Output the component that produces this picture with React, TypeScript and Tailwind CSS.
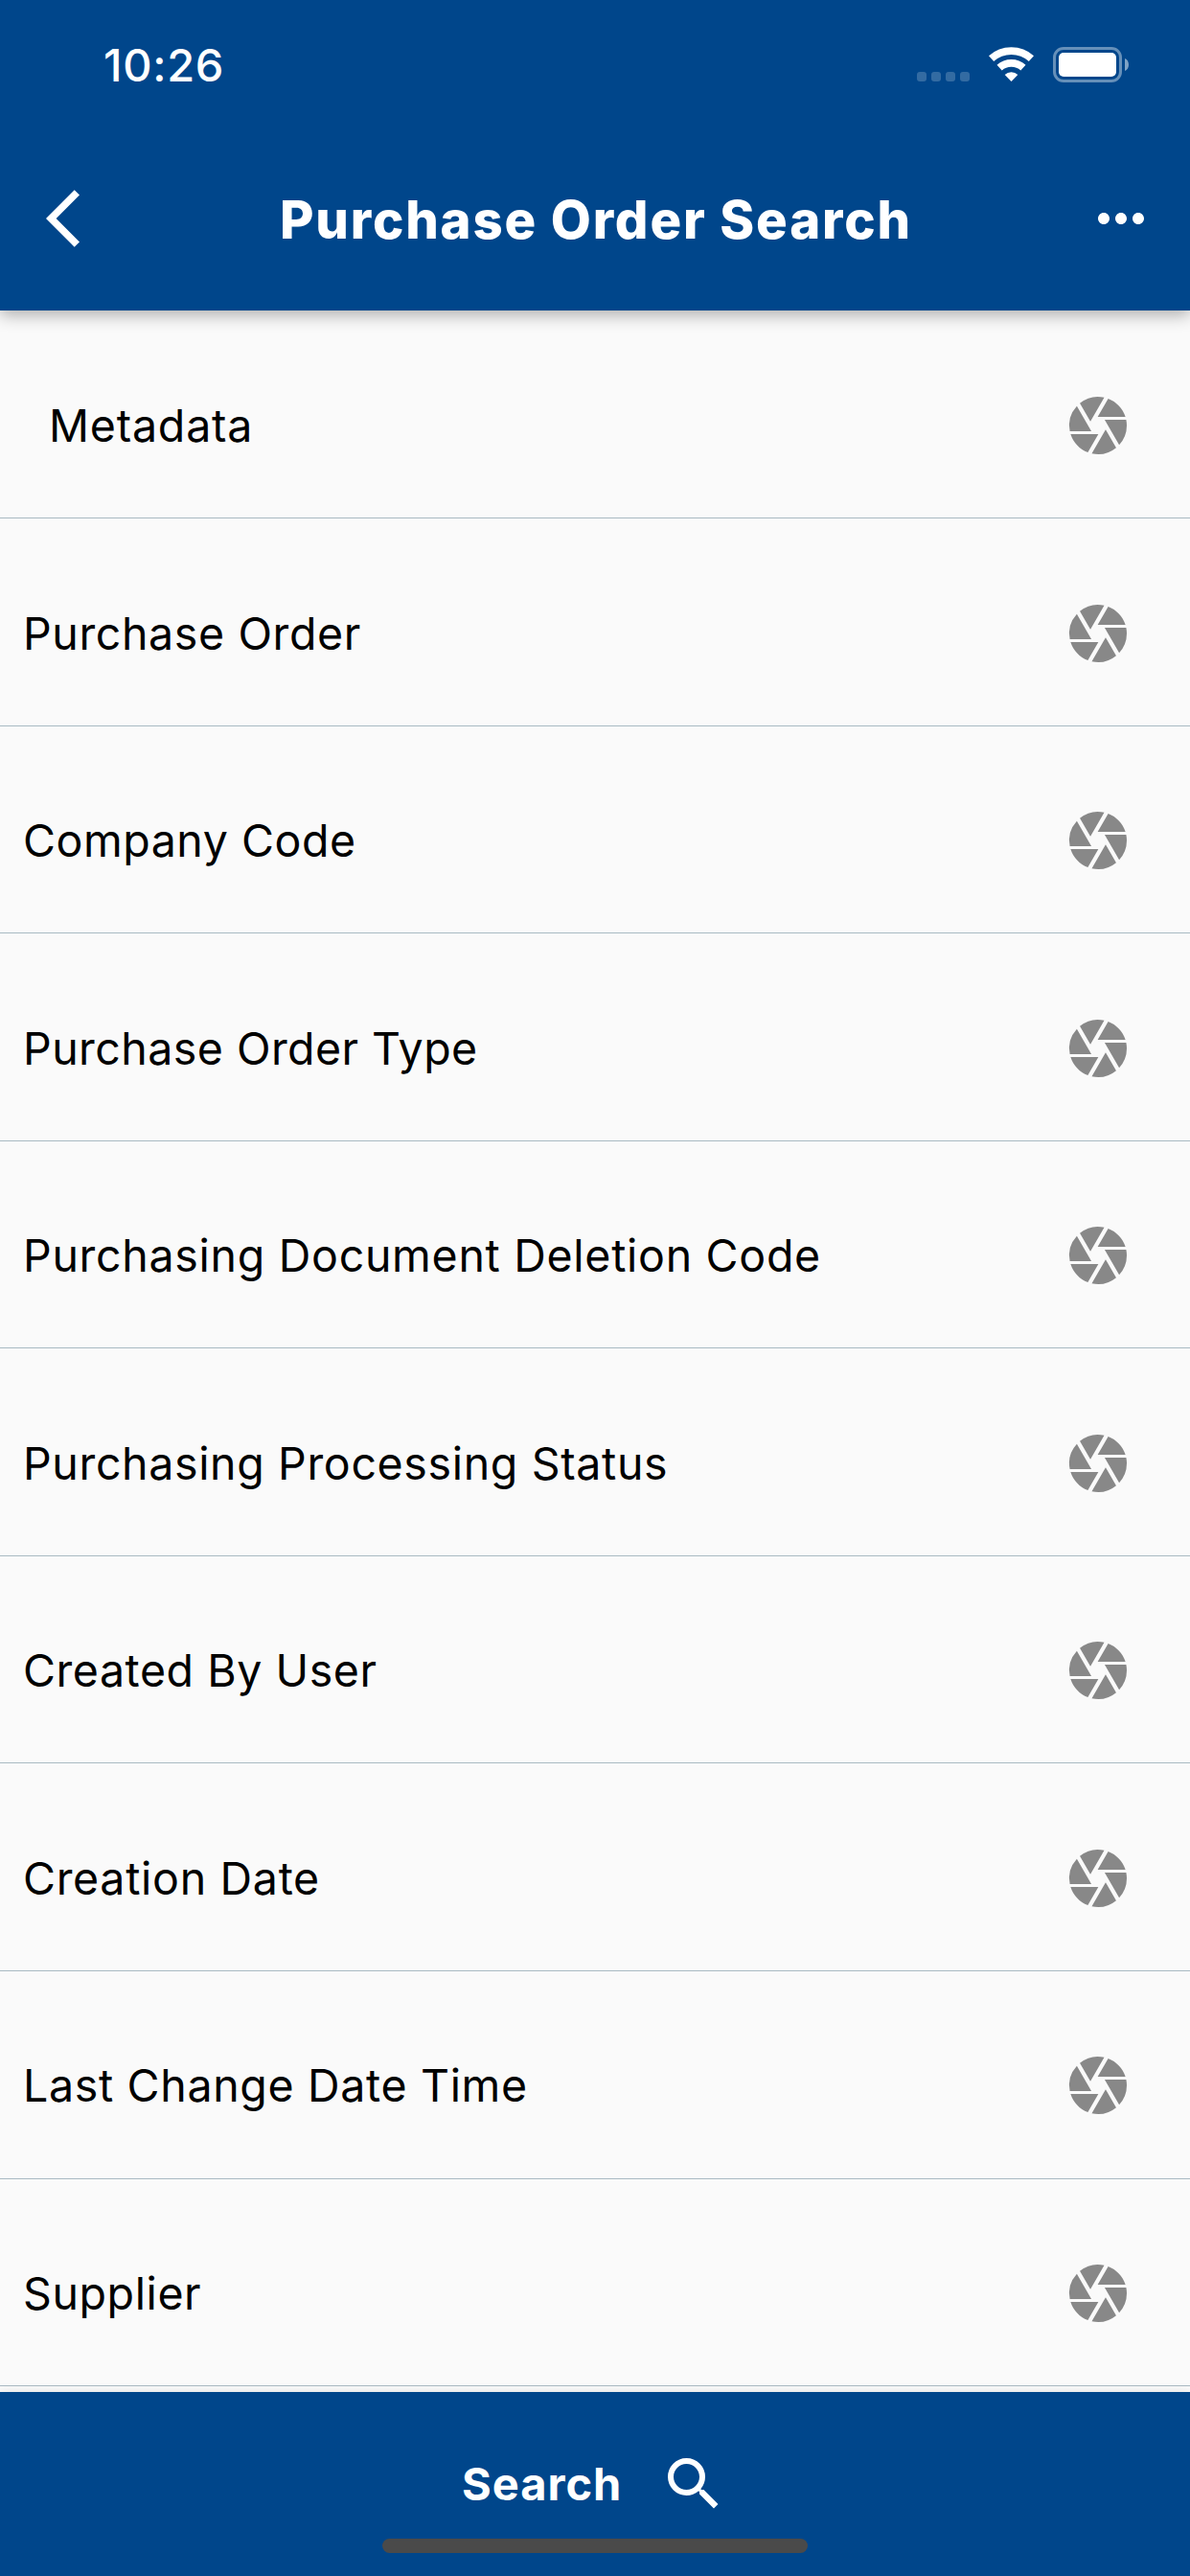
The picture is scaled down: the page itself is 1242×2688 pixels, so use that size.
import { MdCamera, MdMoreHoriz, MdSearch } from "react-icons/md";

const fields = [
  { label: "Metadata", className: "ml-[27px] tracking-[0.8px]" },
  { label: "Purchase Order", className: "tracking-[0.62px]" },
  { label: "Company Code", className: "tracking-[0.55px]" },
  { label: "Purchase Order Type", className: "tracking-[0.45px]" },
  { label: "Purchasing Document Deletion Code", className: "tracking-[0.71px]" },
  { label: "Purchasing Processing Status", className: "tracking-[0.65px]" },
  { label: "Created By User", className: "tracking-[0.56px]" },
  { label: "Creation Date", className: "tracking-[0.7px]" },
  { label: "Last Change Date Time", className: "tracking-[0.67px]" },
  { label: "Supplier", className: "tracking-[0.6px]" },
];

function WifiIcon() {
  return (
    <svg className="h-[37px] w-[47px]" viewBox="0 0 47 37" fill="none" stroke="white" strokeWidth="7.8">
      <path d="M2.6 12.2A31.3 31.3 0 0 1 44.4 12.2" />
      <path d="M11.1 21.7A18.6 18.6 0 0 1 35.9 21.7" />
      <path d="M23.5 36L16.7 28.9A10 10 0 0 1 30.3 28.9Z" fill="white" stroke="none" />
    </svg>
  );
}

function BatteryIcon() {
  return (
    <div className="flex items-center gap-[3px]">
      <div className="h-[37px] w-[72px] rounded-[11px] border-[3px] border-white/40 p-[3px]">
        <div className="h-[25px] w-[60px] rounded-[5px] bg-white" />
      </div>
      <svg className="h-[13px] w-[4px]" viewBox="0 0 4 13">
        <path d="M0 0C5.3 2 5.3 11 0 13Z" fill="white" fillOpacity="0.5" />
      </svg>
    </div>
  );
}

function StatusBar() {
  return (
    <div className="flex h-[132px] justify-between pr-[64px] pl-[108px] text-white">
      <span className="mt-[38px] text-[47px] leading-[60px] font-[550] tracking-[0.7px]">10:26</span>
      <div className="mt-[49px] flex h-[37px] items-center">
        <div className="mr-[20px] flex gap-[5px] self-end pb-px">
          {[0, 1, 2, 3].map((i) => (
            <span key={i} className="size-[10px] rounded-[3px] bg-white/20" />
          ))}
        </div>
        <WifiIcon />
        <div className="ml-[20px]">
          <BatteryIcon />
        </div>
      </div>
    </div>
  );
}

function NavBar() {
  return (
    <div className="grid h-[192px] grid-cols-[240px_1fr_240px] items-center text-white">
      <svg className="ml-[48px] size-[72px]" viewBox="0 0 24 24" fill="currentColor">
        <path d="M11.67 3.87L9.9 2.1 0 12l9.9 9.9 1.77-1.77L3.54 12z" />
      </svg>
      <h1 className="mt-[2px] ml-[52px] text-[54.5px] leading-[66px] font-extrabold tracking-[1.8px] whitespace-nowrap">
        Purchase Order Search
      </h1>
      <MdMoreHoriz className="mr-[36px] size-[72px] justify-self-end" />
    </div>
  );
}

export default function App() {
  return (
    <div className="flex h-[2688px] w-[1242px] flex-col overflow-hidden bg-[#fafafa] font-['Inter',sans-serif]">
      <header className="relative z-10 h-[324px] shrink-0 bg-[#00468b] shadow-[0_5px_16px_rgba(0,0,0,0.3)]">
        <StatusBar />
        <NavBar />
      </header>
      <main className="min-h-0 flex-1 pt-[0.6px]">
        {fields.map(({ label, className }) => (
          <div
            key={label}
            className="flex h-[216.56px] items-center justify-between border-b border-[#a9bac3] pt-[23.5px] pr-[60px] pl-[24px]"
          >
            <span className={`text-[46.5px] leading-[60px] text-black ${className}`}>{label}</span>
            <MdCamera className="size-[72px] text-[#888888]" />
          </div>
        ))}
      </main>
      <footer className="relative z-10 flex h-[192px] shrink-0 flex-col bg-[#00468b] text-white shadow-[0_0_10px_rgba(0,0,0,0.1)]">
        <div className="mt-[60px] flex h-[72px] items-center pl-[482px]">
          <span className="w-[206px] text-[47px] leading-[60px] font-bold tracking-[0.97px]">Search</span>
          <MdSearch className="size-[72px]" />
        </div>
        <div className="mt-[21px] ml-[399px] h-[15px] w-[444px] rounded-full bg-[#4a4a4a]" />
      </footer>
    </div>
  );
}
